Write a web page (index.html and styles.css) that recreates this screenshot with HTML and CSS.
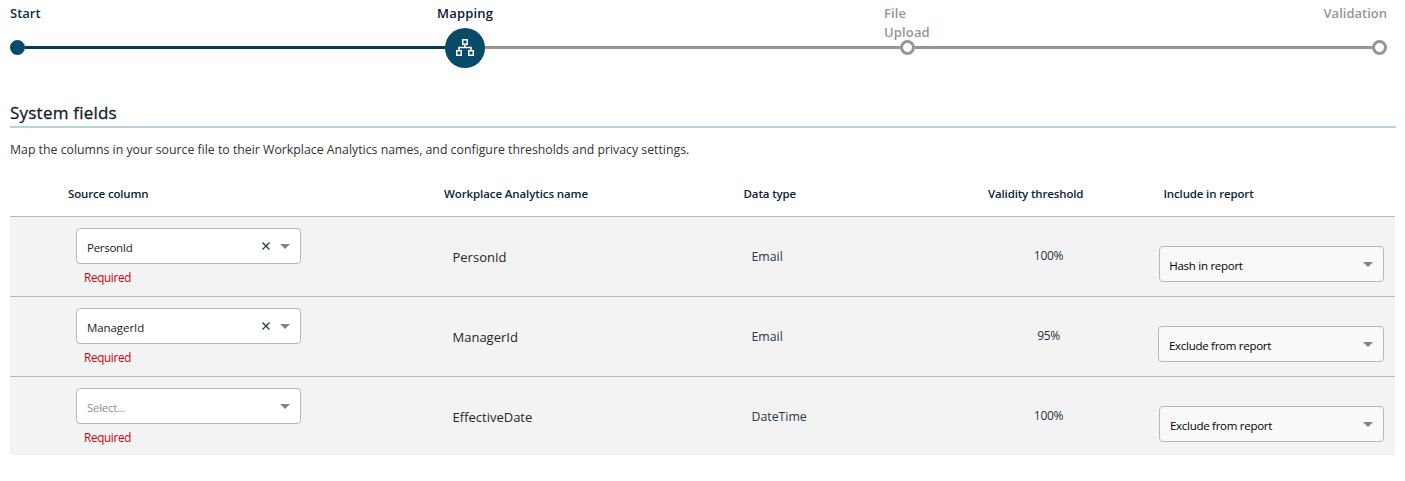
FILE: index.html
```
<!DOCTYPE html>
<html lang="en">
<head>
<meta charset="utf-8">
<title>System fields</title>
<link rel="stylesheet" href="styles.css">
</head>
<body>
<main class="page">
  <nav class="stepper">
    <div class="labels">
      <span class="label done start">Start</span>
      <span class="label done mapping">Mapping</span>
      <span class="label upload">File<br>Upload</span>
      <span class="label validation">Validation</span>
    </div>
    <div class="track">
      <span class="dot filled"></span>
      <span class="line line-done"></span>
      <span class="current">
        <svg width="18" height="18" viewBox="0 0 18 18" fill="none" stroke="#fff" stroke-width="1.5">
          <path d="M6.750.750h4.500v4.500h-4.500zM.750 11.750h4.500v4.500h-4.500zM12.750 11.750h4.500v4.500h-4.500zM9 5.250v3.250M3 11.750V8.500h12v3.250"/>
        </svg>
      </span>
      <span class="line line-second"></span>
      <span class="dot"></span>
      <span class="line"></span>
      <span class="dot"></span>
    </div>
  </nav>

  <h1 class="title"><span class="title-text">System fields</span></h1>
  <p class="intro"><span class="intro-text">Map the columns in your source file to their Workplace Analytics names, and configure thresholds and privacy settings.</span></p>

  <section class="table">
    <div class="row head">
      <span class="h-source">Source column</span>
      <span class="h-name">Workplace Analytics name</span>
      <span class="h-type">Data type</span>
      <span class="h-valid">Validity threshold</span>
      <span class="h-report">Include in report</span>
    </div>
    <div class="row">
      <div class="source">
        <div class="select"><span class="value">PersonId</span><svg class="clear" width="8" height="8" viewBox="0 0 8 8"><path d="M.5.500l7 7M7.500.500l-7 7"/></svg><i class="arrow"></i></div>
        <span class="required">Required</span>
      </div>
      <div class="name">PersonId</div>
      <div class="type">Email</div>
      <div class="valid">100%</div>
      <div class="report"><div class="select muted"><span class="value nudge">Hash in report</span><i class="arrow"></i></div></div>
    </div>
    <div class="row">
      <div class="source">
        <div class="select"><span class="value manager">ManagerId</span><svg class="clear" width="8" height="8" viewBox="0 0 8 8"><path d="M.5.500l7 7M7.500.500l-7 7"/></svg><i class="arrow"></i></div>
        <span class="required">Required</span>
      </div>
      <div class="name">ManagerId</div>
      <div class="type">Email</div>
      <div class="valid">95%</div>
      <div class="report"><div class="select muted wide"><span class="value">Exclude from report</span><i class="arrow"></i></div></div>
    </div>
    <div class="row last">
      <div class="source">
        <div class="select"><span class="value placeholder">Select...</span><i class="arrow"></i></div>
        <span class="required">Required</span>
      </div>
      <div class="name">EffectiveDate</div>
      <div class="type">DateTime</div>
      <div class="valid">100%</div>
      <div class="report"><div class="select muted"><span class="value">Exclude from report</span><i class="arrow"></i></div></div>
    </div>
  </section>
</main>
</body>
</html>
```
FILE: styles.css
```
* { box-sizing: border-box; }
body {
  margin: 0;
  background: #fff;
  color: #0b2437;
  font-family: "Open Sans", "Noto Sans", sans-serif;
  font-size: 12px;
}
.page { width: 1405px; height: 481px; padding: 4px 9px 0 10px; overflow: hidden; }

.stepper { width: 1377px; }
.labels { display: grid; grid-template-columns: 427px 447px 1fr auto; height: 38px; }
.label { font-size: 13px; font-weight: 600; line-height: 19px; color: #979593; }
.done { color: #0b2f4c; }
.mapping { color: #0b1b33; letter-spacing: .2px; }
.upload { letter-spacing: .15px; }
.track { display: flex; align-items: center; height: 40px; margin-top: -14px; }
.dot { width: 15px; height: 15px; margin-bottom: 1px; border: 3px solid #979593; border-radius: 50%; background: #fff; }
.filled { border-color: #074b69; background: #074b69; }
.line { flex: 1; height: 3px; margin-bottom: 1px; background: #979593; }
.line-done { flex: 0 0 420px; background: #003f5c; }
.line-second { flex: 0 0 415px; }
.current {
  display: flex; align-items: center; justify-content: center;
  width: 40px; height: 40px; border-radius: 50%; background: #074b69;
}

.title {
  height: 28px; margin: 32px 0 0; border-bottom: 2px solid #b4d5dc;
  font-size: 17px; font-weight: 500; line-height: 26px; letter-spacing: .22px; color: #111c28;
  -webkit-text-stroke: .3px #111c28;
}
.intro { margin: 12px 0 0; height: 20px; font-size: 12.300px; line-height: 19px; color: #333; white-space: nowrap; }

.table { width: 1385px; margin-top: 11px; }
.row {
  display: grid; grid-template-columns: 434px 299px 237px 144px 1fr;
  height: 80px; background: #f3f3f3; border-top: 1px solid #b8b8b8;
}
.head {
  height: 45px; border: 0; background: #fff; padding-top: 14px;
  font-size: 11.500px; font-weight: 600; line-height: 18px; letter-spacing: -.15px; white-space: nowrap;
}
.h-source { padding-left: 58px; }
.h-name { letter-spacing: -.1px; }
.h-type { padding-left: .6px; }
.h-valid { padding-left: 8px; }
.h-report { padding-left: 39.500px; }
.last { height: 79px; }
.source { padding: 11px 0 0 66px; }
.select {
  display: flex; align-items: center; width: 225px; height: 36px; padding: 0 10px 0 10px;
  border: 1px solid #b8b8b8; border-radius: 4px; background: #fff;
}
.muted { background: #f9f9f9; }
.wide { width: 226px; margin-left: -1px; }
.value { flex: 1; padding-top: 3px; font-size: 11.500px; line-height: 18px; letter-spacing: -.28px; color: #222; white-space: nowrap; }
.value.manager { letter-spacing: -.08px; }
.muted .value { color: #000; }
.muted .nudge { margin-left: -.7px; }
.value.placeholder { color: #8f8f8f; }
.clear { margin-right: 10px; fill: none; stroke: #1f3f55; stroke-width: 1.300; }
.arrow { border: 5px solid transparent; border-top-color: #848484; border-bottom: 0; }
.required { display: block; padding: 4px 0 0 8px; font-size: 11.700px; line-height: 18px; letter-spacing: -.32px; color: #c4060d; }
.name { padding: 30px 0 0 8.500px; font-size: 13px; line-height: 20px; color: #262626; }
.type { padding: 31px 0 0 8.500px; font-size: 12.300px; line-height: 18px; color: #23394b; }
.valid { padding-top: 30px; padding-right: 7px; text-align: center; font-size: 12px; line-height: 17px; letter-spacing: -.3px; color: #1c3546; }
.report { padding: 29px 0 0 35px; }
```
